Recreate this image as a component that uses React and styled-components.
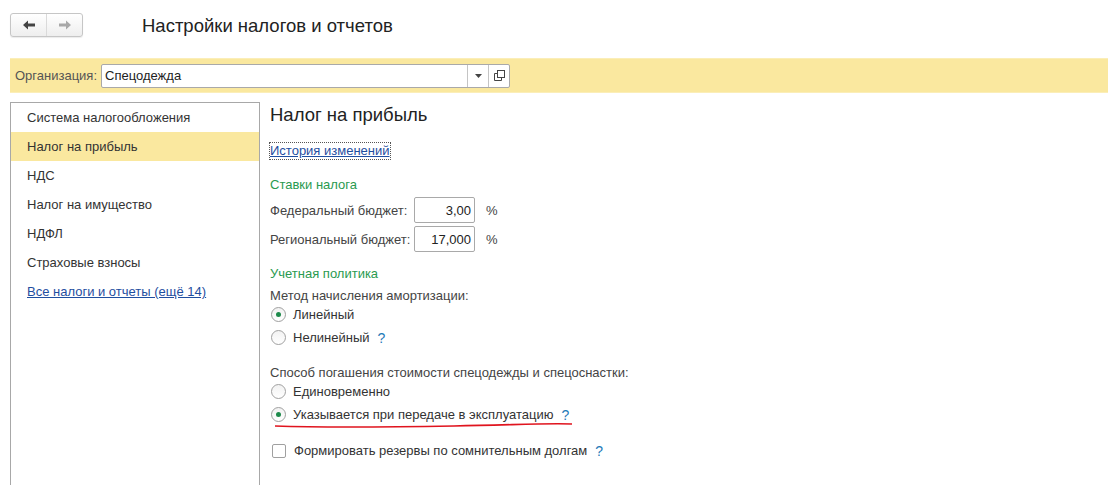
import React from 'react';
import styled, { createGlobalStyle } from 'styled-components';

const GlobalStyle = createGlobalStyle`
  html, body {
    margin: 0;
    padding: 0;
    background: #fff;
    font-family: Arial, "Liberation Sans", sans-serif;
    font-size: 13px;
    color: #333;
  }
  * { box-sizing: border-box; }
`;

const Page = styled.div`
  width: 1108px;
  height: 485px;
  overflow: hidden;
`;

const Header = styled.div`
  display: flex;
  align-items: center;
  height: 58px;
  padding: 0 0 9px 10px;
`;

const NavGroup = styled.div`
  display: flex;
  width: 73px;
  height: 24px;
  border: 1px solid #c6c6c6;
  border-radius: 3px;
  background: linear-gradient(#ffffff, #eeeeee);
  box-shadow: 0 1px 1px rgba(0, 0, 0, 0.08);
`;

const NavButton = styled.div`
  flex: 1;
  display: flex;
  align-items: center;
  justify-content: center;
  & + & {
    border-left: 1px solid #dadada;
  }
`;

const Title = styled.h1`
  margin: 2px 0 0 59px;
  font-size: 18.5px;
  font-weight: normal;
  color: #222;
`;

const OrgBar = styled.div`
  display: flex;
  align-items: center;
  height: 35px;
  margin-left: 10px;
  padding-left: 5px;
  background: #fae89f;
  border-top: 1px solid #fbeeb8;
  border-bottom: 1px solid #fbeeb8;
`;

const OrgLabel = styled.span`
  color: #555;
  margin-right: 4px;
`;

const OrgField = styled.div`
  display: flex;
  height: 24px;
  width: 409px;
  border: 1px solid #a9a9a9;
  border-radius: 2px;
  background: #fff;
`;

const OrgValue = styled.div`
  flex: 1;
  display: flex;
  align-items: center;
  padding-left: 3px;
  color: #222;
`;

const FieldButton = styled.div`
  width: 21px;
  display: flex;
  align-items: center;
  justify-content: center;
  border-left: 1px solid #c4c4c4;
`;

const Main = styled.div`
  display: flex;
  margin-top: 9px;
`;

const Sidebar = styled.div`
  width: 250px;
  height: 400px;
  margin-left: 10px;
  border: 1px solid #a8a8a8;
  border-bottom: none;
`;

const SideItem = styled.div`
  height: 29px;
  display: flex;
  align-items: center;
  padding-left: 16px;
  color: #333;
  background: ${p => (p.$active ? '#fae89f' : 'transparent')};
`;

const SideLink = styled(SideItem)`
  color: #1f4ea0;
  text-decoration: underline;
`;

const Content = styled.div`
  position: relative;
  margin-left: 10px;
  flex: 1;
`;

const Heading = styled.h2`
  margin: 0;
  height: 25px;
  line-height: 25px;
  font-size: 18.5px;
  font-weight: normal;
  color: #222;
`;

const HistoryLink = styled.span`
  display: inline-block;
  margin-top: 16px;
  line-height: 16px;
  outline: 1px dotted #555;
  color: #1f4ea0;
  text-decoration: underline;
`;

const Group = styled.div`
  margin-top: ${p => p.$top}px;
  line-height: 18px;
  color: ${p => (p.$green ? '#2a9a50' : '#444')};
`;

const FieldRow = styled.div`
  display: flex;
  align-items: center;
  height: 26px;
  margin-top: 3px;
  color: #444;
`;

const FieldLabel = styled.span`
  width: 144px;
`;

const NumInput = styled.div`
  width: 61px;
  height: 26px;
  border: 1px solid #a9a9a9;
  border-radius: 2px;
  display: flex;
  align-items: center;
  justify-content: flex-end;
  padding-right: 3px;
  color: #222;
`;

const Unit = styled.span`
  margin-left: 11px;
`;

const OptionRow = styled.div`
  display: flex;
  align-items: center;
  height: 23px;
  color: #333;
  margin-top: ${p => p.$top || 0}px;
`;

const Radio = styled.span`
  width: 15px;
  height: 15px;
  margin: 0 7px 0 1px;
  border-radius: 50%;
  border: 1px solid #a0a0a0;
  background: linear-gradient(#f2f2f2, #ffffff);
  display: flex;
  align-items: center;
  justify-content: center;
  &::after {
    content: '';
    width: 5px;
    height: 5px;
    border-radius: 50%;
    background: ${p => (p.$checked ? '#1e8a4c' : 'transparent')};
  }
`;

const Checkbox = styled.span`
  width: 14px;
  height: 14px;
  margin: 0 8px 0 2px;
  border: 1px solid #a0a0a0;
  border-radius: 2px;
  background: #fff;
`;

const Help = styled.span`
  margin-left: 8px;
  color: #1f7ab8;
  font-size: 14px;
`;

const Underline = styled.svg`
  position: absolute;
  left: 4px;
  top: 319px;
`;

const items = [
  'Система налогообложения',
  'Налог на прибыль',
  'НДС',
  'Налог на имущество',
  'НДФЛ',
  'Страховые взносы',
];

export default function App() {
  return (
    <Page>
      <GlobalStyle />
      <Header>
        <NavGroup>
          <NavButton>
            <svg width="14" height="10" viewBox="0 0 14 10">
              <path d="M1 5 L6 0.5 V3.5 H13 V6.5 H6 V9.5 Z" fill="#444" />
            </svg>
          </NavButton>
          <NavButton>
            <svg width="14" height="10" viewBox="0 0 14 10">
              <path d="M13 5 L8 0.5 V3.5 H1 V6.5 H8 V9.5 Z" fill="#a8a8a8" />
            </svg>
          </NavButton>
        </NavGroup>
        <Title>Настройки налогов и отчетов</Title>
      </Header>

      <OrgBar>
        <OrgLabel>Организация:</OrgLabel>
        <OrgField>
          <OrgValue>Спецодежда</OrgValue>
          <FieldButton>
            <svg width="7" height="4" viewBox="0 0 7 4">
              <path d="M0 0 H7 L3.5 4 Z" fill="#444" />
            </svg>
          </FieldButton>
          <FieldButton>
            <svg width="11" height="11" viewBox="0 0 11 11">
              <rect x="3.5" y="0.5" width="7" height="7" fill="none" stroke="#444" />
              <path d="M0.5 3.5 V10.5 H7.5 V7.5 M0.5 3.5 H3.5" fill="none" stroke="#444" />
            </svg>
          </FieldButton>
        </OrgField>
      </OrgBar>

      <Main>
        <Sidebar>
          {items.map((t, i) => (
            <SideItem key={t} $active={i === 1}>{t}</SideItem>
          ))}
          <SideLink>Все налоги и отчеты (ещё 14)</SideLink>
        </Sidebar>

        <Content>
          <Heading>Налог на прибыль</Heading>
          <HistoryLink>История изменений</HistoryLink>

          <Group $green $top={17}>Ставки налога</Group>
          <FieldRow>
            <FieldLabel>Федеральный бюджет:</FieldLabel>
            <NumInput>3,00</NumInput>
            <Unit>%</Unit>
          </FieldRow>
          <FieldRow>
            <FieldLabel>Региональный бюджет:</FieldLabel>
            <NumInput>17,000</NumInput>
            <Unit>%</Unit>
          </FieldRow>

          <Group $green $top={13}>Учетная политика</Group>
          <Group $top={4}>Метод начисления амортизации:</Group>
          <OptionRow $top={-2}>
            <Radio $checked />Линейный
          </OptionRow>
          <OptionRow>
            <Radio />Нелинейный<Help>?</Help>
          </OptionRow>

          <Group $top={15}>Способ погашения стоимости спецодежды и спецоснастки:</Group>
          <OptionRow $top={-2}>
            <Radio />Единовременно
          </OptionRow>
          <OptionRow>
            <Radio $checked />Указывается при передаче в эксплуатацию<Help>?</Help>
          </OptionRow>

          <OptionRow $top={13}>
            <Checkbox />Формировать резервы по сомнительным долгам<Help>?</Help>
          </OptionRow>

          <Underline width="300" height="8" viewBox="0 0 300 8">
            <path d="M1 5 C60 7, 120 6, 180 5 S 270 2, 298 3" fill="none" stroke="#e0141e" strokeWidth="1.6" />
          </Underline>
        </Content>
      </Main>
    </Page>
  );
}
